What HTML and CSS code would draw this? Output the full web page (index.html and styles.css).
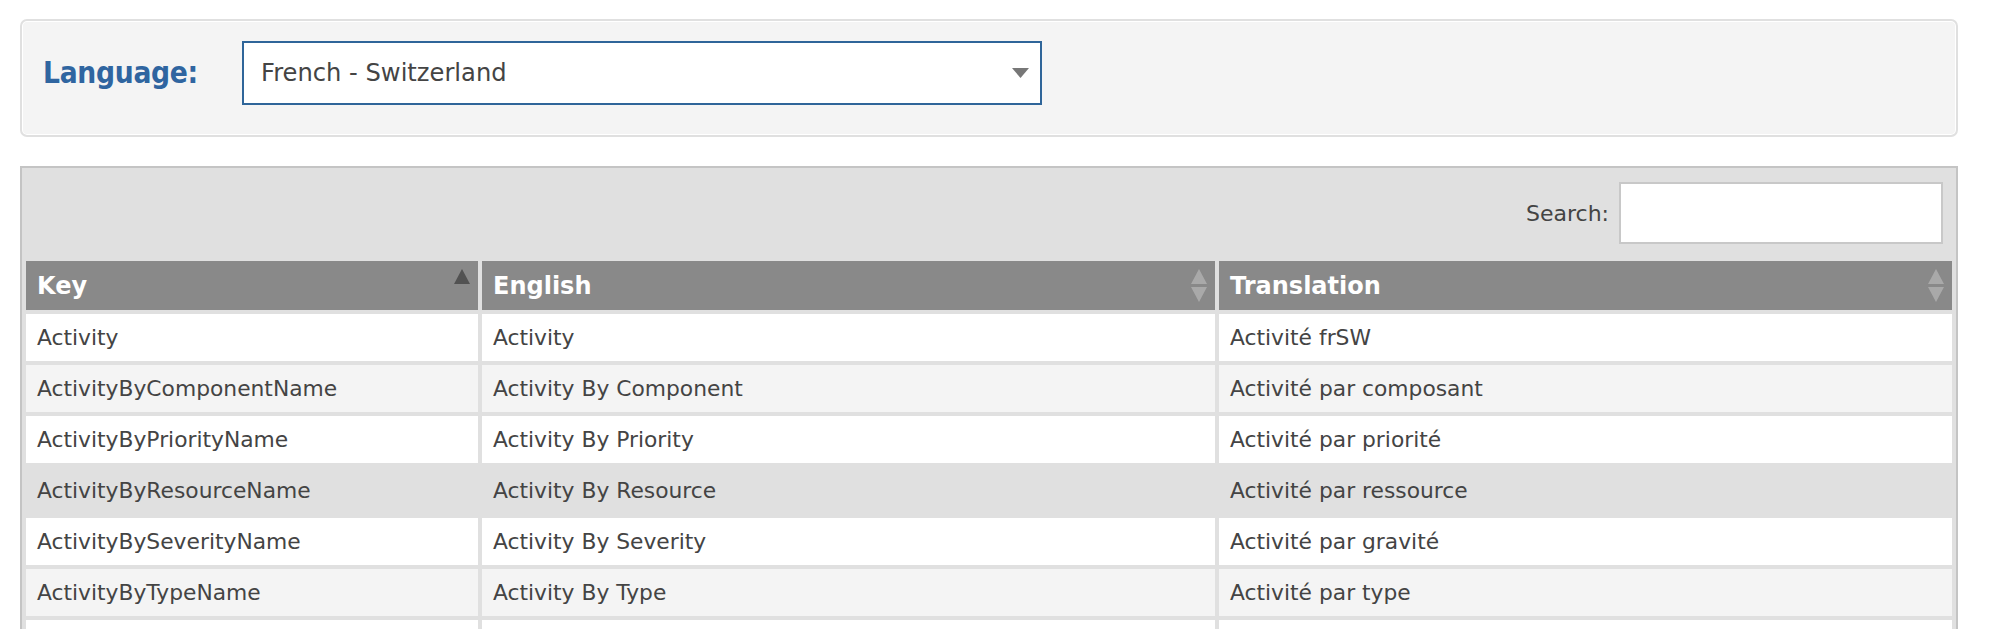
FILE: index.html
```html
<!DOCTYPE html>
<html lang="en">
<head>
<meta charset="utf-8">
<title>Translations</title>
<link rel="stylesheet" href="styles.css">
</head>
<body>
  <div class="lang-panel">
    <label class="lang-label">Language:</label>
    <div class="lang-select">
      <span class="lang-value">French - Switzerland</span>
      <svg class="select-arrow" width="17" height="10" viewBox="0 0 17 10"><polygon points="0,0 17,0 8.5,10" fill="#777"/></svg>
    </div>
  </div>

  <div class="table-panel">
    <div class="search-row">
      <span class="search-label">Search:</span>
      <div class="search-input"></div>
    </div>
    <table class="grid">
      <colgroup>
        <col class="c-key">
        <col class="c-en">
        <col>
      </colgroup>
      <thead>
        <tr>
          <th><div class="th-inner"><span>Key</span>
            <svg class="sort" width="16" height="34" viewBox="0 0 16 34"><polygon points="8,0 16,15 0,15" class="sort-active"/></svg></div></th>
          <th><div class="th-inner"><span>English</span>
            <svg class="sort" width="16" height="34" viewBox="0 0 16 34"><polygon points="8,0 16,15 0,15" class="sort-off"/><polygon points="0,18 16,18 8,33" class="sort-off"/></svg></div></th>
          <th><div class="th-inner"><span>Translation</span>
            <svg class="sort" width="16" height="34" viewBox="0 0 16 34"><polygon points="8,0 16,15 0,15" class="sort-off"/><polygon points="0,18 16,18 8,33" class="sort-off"/></svg></div></th>
        </tr>
      </thead>
      <tbody>
        <tr class="odd"><td>Activity</td><td>Activity</td><td>Activité frSW</td></tr>
        <tr class="even"><td>ActivityByComponentName</td><td>Activity By Component</td><td>Activité par composant</td></tr>
        <tr class="odd"><td>ActivityByPriorityName</td><td>Activity By Priority</td><td>Activité par priorité</td></tr>
        <tr class="hover"><td>ActivityByResourceName</td><td>Activity By Resource</td><td>Activité par ressource</td></tr>
        <tr class="odd"><td>ActivityBySeverityName</td><td>Activity By Severity</td><td>Activité par gravité</td></tr>
        <tr class="even"><td>ActivityByTypeName</td><td>Activity By Type</td><td>Activité par type</td></tr>
        <tr class="odd"><td></td><td></td><td></td></tr>
      </tbody>
    </table>
  </div>
</body>
</html>
```

FILE: styles.css
```css
html, body {
  margin: 0;
  background: #ffffff;
}

body {
  padding: 19px 49px 0 20px;
  font-family: "DejaVu Sans", Verdana, sans-serif;
  color: #444444;
}

.lang-panel {
  display: flex;
  align-items: center;
  background: #f4f4f4;
  border: 2px solid #e0e0e0;
  border-radius: 7px;
  box-shadow: inset 0 0 0 1px #ffffff;
  padding: 20px 21px 30px 21px;
}

.lang-label {
  flex: none;
  width: 199px;
  font-family: "DejaVu Sans Condensed", "DejaVu Sans", sans-serif;
  font-weight: bold;
  font-size: 29.6px;
  color: #2f65a0;
  letter-spacing: -0.3px;
}

.lang-select {
  box-sizing: border-box;
  width: 800px;
  height: 64px;
  display: flex;
  align-items: center;
  justify-content: space-between;
  background: #ffffff;
  border: 2px solid #2f6599;
  padding: 0 11px 0 17px;
}

.lang-value {
  font-size: 24.2px;
  color: #444444;
}

.select-arrow {
  display: block;
}

.table-panel {
  margin-top: 29px;
  background: #e0e0e0;
  border: 2px solid #c4c4c4;
  border-bottom: none;
  height: 500px;
}

.search-row {
  display: flex;
  justify-content: flex-end;
  align-items: center;
  gap: 10px;
  padding: 14px 13px 13px 0;
}

.search-label {
  font-size: 22px;
  color: #444444;
}

.search-input {
  box-sizing: border-box;
  width: 324px;
  height: 62px;
  background: #ffffff;
  border: 2px solid #c8c8c8;
}

.grid {
  width: 100%;
  table-layout: fixed;
  border-collapse: separate;
  border-spacing: 4px;
}

.c-key { width: 452px; }
.c-en { width: 733px; }

.grid th {
  height: 49px;
  padding: 0 8px 0 11px;
  background: #898989;
  color: #ffffff;
  font-weight: bold;
  font-size: 24px;
  text-align: left;
}

.th-inner {
  display: flex;
  align-items: center;
  justify-content: space-between;
}

.sort {
  display: block;
  flex: none;
}

.sort-off { fill: #a9a9a9; }
.sort-active { fill: #525252; }

.grid td {
  height: 47px;
  padding: 0 11px;
  font-size: 21.8px;
  color: #444444;
  white-space: nowrap;
}

.odd td { background: #ffffff; }
.even td { background: #f4f4f4; }
.hover td { background: #e0e0e0; }
```
